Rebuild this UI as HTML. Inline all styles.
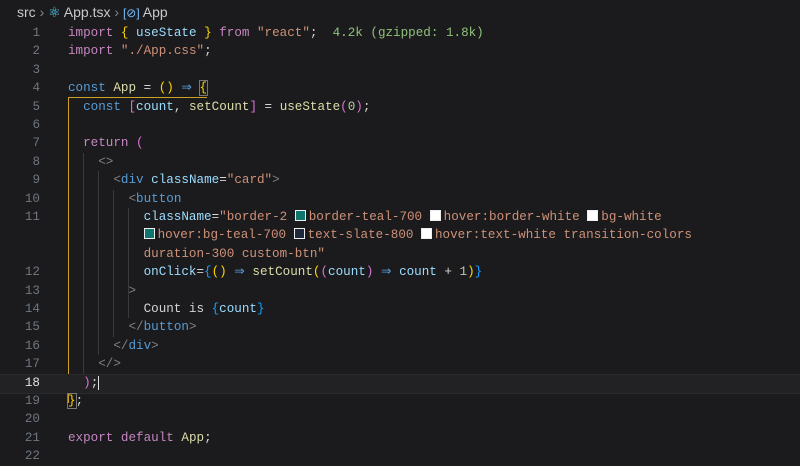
<!DOCTYPE html><html><head><style>
body{margin:0;width:800px;height:464px;background:#1b1b1d;overflow:hidden;position:relative;font-family:"Liberation Mono",monospace;}
.bc{position:absolute;top:4px;left:17px;font:14px "Liberation Sans",sans-serif;color:#c8c8c8;white-space:pre;}
.r{position:absolute;left:0;width:800px;height:18.4px;line-height:18.4px;font-size:12.6px;white-space:pre;color:#d4d4d4}
.n{position:absolute;right:760px;color:#6e7681;text-align:right;}
.c{position:absolute;left:68px}
.k{color:#c586c0}.b{color:#569cd6}.v{color:#9cdcfe}.f{color:#dcdcaa}.s{color:#ce9178}.g{color:#808080}
.y{color:#ffd700}.p{color:#da70d6}.u{color:#179fff}.gr{color:#8fc27a}.nm{color:#b5cea8}
.sq{display:inline-block;width:9px;height:9px;border:1px solid #eee;margin-right:3px;vertical-align:-1px}
.ig{position:absolute;width:1px;background:#3a3a3a}
</style></head><body>
<div class="bc">src <span style="color:#888">›</span> <span style="color:#61dafb">⚛</span> App.tsx <span style="color:#888">›</span> <span style="color:#75beff;font-size:12px">[⊘]</span> App</div>
<div class="ig" style="left:68px;top:97px;height:306px;background:#c9a227"></div>
<div style="position:absolute;left:68px;top:97px;width:139px;height:1px;background:#c9a227"></div>
<div class="ig" style="left:83px;top:153px;height:221px"></div>
<div class="ig" style="left:98px;top:171px;height:184px"></div>
<div class="ig" style="left:113px;top:190px;height:147px"></div>
<div class="ig" style="left:128px;top:208px;height:110px"></div>
<div style="position:absolute;left:0;top:374px;width:800px;height:18px;background:#222224;border-top:1px solid #2a2a2c;border-bottom:1px solid #2a2a2c"></div>
<div class="r" style="top:24px"><span class="n">1</span><span class="c"><span class="k">import</span> <span class="y">{</span> <span class="v">useState</span> <span class="y">}</span> <span class="k">from</span> <span class="s">"react"</span>;  <span class="gr">4.2k (gzipped: 1.8k)</span></span></div>
<div class="r" style="top:42.4px"><span class="n">2</span><span class="c"><span class="k">import</span> <span class="s">"./App.css"</span>;</span></div>
<div class="r" style="top:60.8px"><span class="n">3</span></div>
<div class="r" style="top:79.2px"><span class="n">4</span><span class="c"><span class="b">const</span> <span class="f">App</span> = <span class="y">()</span> <span class="b">⇒</span> <span class="y" style="outline:1px solid #777">{</span></span></div>
<div class="r" style="top:97.6px"><span class="n">5</span><span class="c">  <span class="b">const</span> <span class="p">[</span><span class="v">count</span>, <span class="f">setCount</span><span class="p">]</span> = <span class="f">useState</span><span class="p">(</span><span class="nm">0</span><span class="p">)</span>;</span></div>
<div class="r" style="top:116px"><span class="n">6</span></div>
<div class="r" style="top:134.4px"><span class="n">7</span><span class="c">  <span class="k">return</span> <span class="p">(</span></span></div>
<div class="r" style="top:152.8px"><span class="n">8</span><span class="c">    <span class="g">&lt;&gt;</span></span></div>
<div class="r" style="top:171.2px"><span class="n">9</span><span class="c">      <span class="g">&lt;</span><span class="b">div</span> <span class="v">className</span>=<span class="s">"card"</span><span class="g">&gt;</span></span></div>
<div class="r" style="top:189.6px"><span class="n">10</span><span class="c">        <span class="g">&lt;</span><span class="b">button</span></span></div>
<div class="r" style="top:208px"><span class="n">11</span><span class="c">          <span class="v">className</span>=<span class="s">"border-2 <span class="sq" style="background:#0f766e"></span>border-teal-700 <span class="sq" style="background:#fff"></span>hover:border-white <span class="sq" style="background:#fff"></span>bg-white</span></span></div>
<div class="r" style="top:226.4px"><span class="c">          <span class="s"><span class="sq" style="background:#0f766e"></span>hover:bg-teal-700 <span class="sq" style="background:#1e293b"></span>text-slate-800 <span class="sq" style="background:#fff"></span>hover:text-white transition-colors</span></span></div>
<div class="r" style="top:244.8px"><span class="c">          <span class="s">duration-300 custom-btn"</span></span></div>
<div class="r" style="top:263.2px"><span class="n">12</span><span class="c">          <span class="v">onClick</span>=<span class="u">{</span><span class="y">()</span> <span class="b">⇒</span> <span class="f">setCount</span><span class="y">(</span><span class="p">(</span><span class="v">count</span><span class="p">)</span> <span class="b">⇒</span> <span class="v">count</span> + <span class="nm">1</span><span class="y">)</span><span class="u">}</span></span></div>
<div class="r" style="top:281.6px"><span class="n">13</span><span class="c">        <span class="g">&gt;</span></span></div>
<div class="r" style="top:300px"><span class="n">14</span><span class="c">          Count is <span class="u">{</span><span class="v">count</span><span class="u">}</span></span></div>
<div class="r" style="top:318.4px"><span class="n">15</span><span class="c">        <span class="g">&lt;/</span><span class="b">button</span><span class="g">&gt;</span></span></div>
<div class="r" style="top:336.8px"><span class="n">16</span><span class="c">      <span class="g">&lt;/</span><span class="b">div</span><span class="g">&gt;</span></span></div>
<div class="r" style="top:355.2px"><span class="n">17</span><span class="c">    <span class="g">&lt;/&gt;</span></span></div>
<div class="r" style="top:373.6px"><span class="n" style="color:#e0e0e0">18</span><span class="c">  <span class="p">)</span>;<span style="border-left:1.5px solid #ddd"></span></span></div>
<div class="r" style="top:392px"><span class="n">19</span><span class="c"><span class="y" style="outline:1px solid #777">}</span>;</span></div>
<div class="r" style="top:410.4px"><span class="n">20</span></div>
<div class="r" style="top:428.8px"><span class="n">21</span><span class="c"><span class="k">export</span> <span class="k">default</span> <span class="f">App</span>;</span></div>
<div class="r" style="top:447.2px"><span class="n">22</span></div>
</body></html>
